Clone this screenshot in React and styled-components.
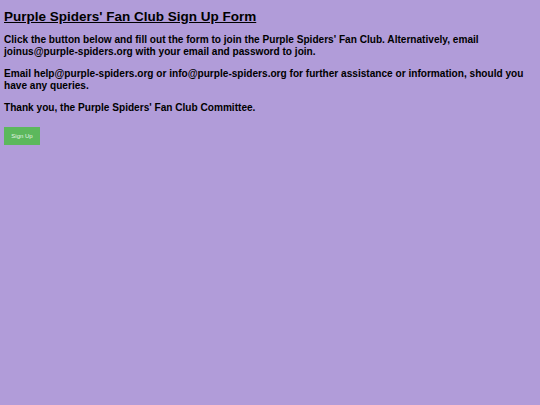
import styled, { createGlobalStyle } from "styled-components";

const GlobalStyle = createGlobalStyle`
  html, body {
    margin: 0;
    background: #b19cd9;
  }
  body {
    padding: 4px;
    font-family: "Liberation Sans", Arial, sans-serif;
    color: #000;
  }
`;

const Page = styled.div`
  display: flex;
  flex-direction: column;
  align-items: flex-start;
`;

const Title = styled.h1`
  font-size: 13.5px;
  font-weight: 700;
  text-decoration: underline;
  margin: 4.5px 0 9.5px;
  line-height: 16px;
`;

const Text = styled.p`
  font-size: 10.1px;
  font-weight: 700;
  line-height: 12px;
  margin: 0 0 10px;
`;

const Button = styled.button`
  margin-top: 3px;
  width: 36px;
  height: 18px;
  padding: 0;
  border: none;
  background: #5cb85c;
  color: #e4f4e4;
  font-family: "Liberation Sans", Arial, sans-serif;
  font-size: 6px;
  cursor: pointer;
`;

export default function App() {
  return (
    <Page>
      <GlobalStyle />
      <Title>Purple Spiders' Fan Club Sign Up Form</Title>
      <Text>
        Click the button below and fill out the form to join the Purple Spiders' Fan Club.
        Alternatively, email joinus@purple-spiders.org with your email and password to join.
      </Text>
      <Text>
        Email help@purple-spiders.org or info@purple-spiders.org for further assistance or
        information, should you have any queries.
      </Text>
      <Text>Thank you, the Purple Spiders' Fan Club Committee.</Text>
      <Button>Sign Up</Button>
    </Page>
  );
}
